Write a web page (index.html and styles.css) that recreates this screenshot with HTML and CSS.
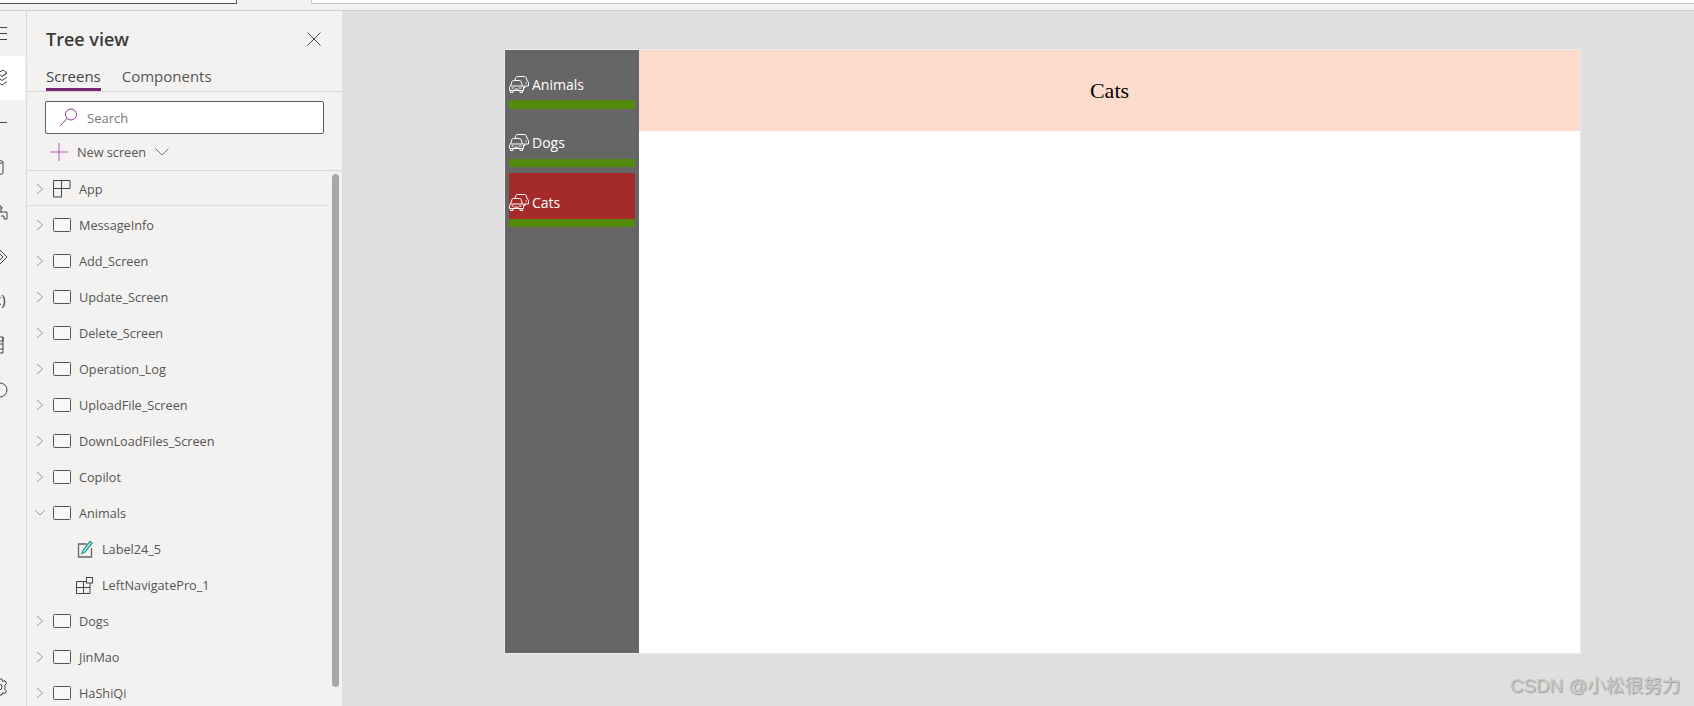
FILE: index.html
```html
<!DOCTYPE html>
<html lang="en">

<head>
    <meta charset="utf-8">
    <title>Tree view</title>
    <link rel="stylesheet" href="styles.css">
</head>

<body>
    <svg class="defs" width="0" height="0">
        <symbol id="screen" viewBox="0 0 18 14">
            <rect x="0.5" y="0.5" width="17" height="13" rx="1" fill="#f9f8f8" stroke="#555"></rect>
        </symbol>
        <symbol id="closed" viewBox="0 0 8 12">
            <path d="M1 1l5.5 5L1 11" fill="none" stroke="#999"></path>
        </symbol>
        <symbol id="car" viewBox="0 0 20 17">
            <g fill="none" stroke="#fff" stroke-width="1">
                <path d="M6 4l1-2.6C7.2.9 7.7.5 8.3.5h7.400c.6 0 1.100.4 1.300.9L18.300 5c.8.4 1.200.9 1.200 1.500V10h-5"></path>
                <path d="M16 10v1.500h-1.500 M16.500 7h1.500"></path>
                <path d="M1.500 10L3 5.500c.2-.6.700-1 1.300-1h6.400c.6 0 1.100.4 1.300 1l1.500 4.500"></path>
                <path d="M1.500 10c-.7.300-1 .7-1 1.300v3.200h14v-3.200c0-.6-.3-1-1-1.300z"></path>
                <path d="M1.500 14.500v2H4v-2 M11 14.500v2h2.500v-2 M2.500 12H5 M10 12h2.500 M5.500 14.500l.7-1.500h2.600l.7 1.500"></path>
            </g>
        </symbol>
    </svg>

    <header class="topbar">
        <div class="topbox topbox-left"></div>
        <div class="topbox topbox-right"></div>
    </header>

    <main class="studio">
        <nav class="rail">
            <div class="rail-item">
                <svg class="rail-icon"><path d="M-8 16.500H7 M-8 22.500H7 M-8 28.500H7"></path></svg>
            </div>
            <div class="rail-item rail-active">
                <svg class="rail-icon"><path d="M-2 17l5-3 4 3-5 3.500 M7 17l-5 3.500L-2 17 M-2 21.500l4 3 5-3.500 M-2 26l4 3 5-3.500"></path></svg>
            </div>
            <div class="rail-item">
                <svg class="rail-icon"><path d="M-8 22.500H7"></path></svg>
            </div>
            <div class="rail-item">
                <svg class="rail-icon"><path d="M-8 17c0-2 11-2 11 0v11c0 2-11 2-11 0z M-8 17c0 2 11 2 11 0"></path></svg>
            </div>
            <div class="rail-item">
                <svg class="rail-icon"><path d="M-3 17h4v6h-4 M1 23h6v7H4v-3H1 M1 19h2"></path></svg>
            </div>
            <div class="rail-item">
                <svg class="rail-icon"><path d="M0 16l7 7-7 7-7-7z M0 20l3 3-3 3"></path></svg>
            </div>
            <div class="rail-item">
                <span class="rail-text">(x)</span>
            </div>
            <div class="rail-item">
                <svg class="rail-icon"><path d="M-4 14h7v4h-7 M3 14v16 M-4 21h7 M-4 26h7 M-4 30h7"></path></svg>
            </div>
            <div class="rail-item">
                <svg class="rail-icon"><circle cx="0" cy="22" r="7"></circle></svg>
            </div>
            <div class="rail-item rail-bottom">
                <svg class="rail-icon"><path d="M-1 14h3l.6 2.400 2.400-.6 1.500 2.600-1.800 1.700.5 2-.5 2 1.800 1.700-1.500 2.600-2.400-.6L2 30h-3"></path><circle cx="-1" cy="22" r="3"></circle></svg>
            </div>
        </nav>

        <aside class="panel">
            <div class="panel-head">
                <h1 class="panel-title">Tree view</h1>
                <svg class="close" width="14" height="14" viewBox="0 0 14 14"><path d="M.5.5l13 13 M13.500.5l-13 13" stroke="#444" fill="none"></path></svg>
            </div>
            <div class="tabs">
                <span class="tab tab-on">Screens</span>
                <span class="tab">Components</span>
            </div>
            <div class="search">
                <svg class="search-icon" width="19" height="19" viewBox="0 0 19 19"><circle cx="12" cy="6.500" r="5.500" fill="none" stroke="#8a3a8e"></circle><path d="M8 10.500L1 18" stroke="#8a3a8e" fill="none"></path></svg>
                <span class="search-text">Search</span>
            </div>
            <div class="newscreen">
                <svg width="18" height="18" viewBox="0 0 18 18"><path d="M0 9h18 M9 0v18" stroke="#a762a9" fill="none"></path></svg>
                <span class="newscreen-text">New screen</span>
                <svg width="14" height="8" viewBox="0 0 14 8"><path d="M.5.5L7 7 13.500.5" stroke="#777" fill="none"></path></svg>
            </div>

            <div class="tree">
                <div class="row row-app">
                    <svg class="chev"><use href="#closed"></use></svg>
                    <svg class="ico" viewBox="0 0 18 18"><path d="M.5.5h16.500v8H.5z M.5 8.500v8.500h8V.5" fill="none" stroke="#444"></path></svg>
                    <span>App</span>
                </div>
                <div class="row"><svg class="chev"><use href="#closed"></use></svg><svg class="ico"><use href="#screen"></use></svg><span>MessageInfo</span></div>
                <div class="row"><svg class="chev"><use href="#closed"></use></svg><svg class="ico"><use href="#screen"></use></svg><span>Add_Screen</span></div>
                <div class="row"><svg class="chev"><use href="#closed"></use></svg><svg class="ico"><use href="#screen"></use></svg><span>Update_Screen</span></div>
                <div class="row"><svg class="chev"><use href="#closed"></use></svg><svg class="ico"><use href="#screen"></use></svg><span>Delete_Screen</span></div>
                <div class="row"><svg class="chev"><use href="#closed"></use></svg><svg class="ico"><use href="#screen"></use></svg><span>Operation_Log</span></div>
                <div class="row"><svg class="chev"><use href="#closed"></use></svg><svg class="ico"><use href="#screen"></use></svg><span>UploadFile_Screen</span></div>
                <div class="row"><svg class="chev"><use href="#closed"></use></svg><svg class="ico"><use href="#screen"></use></svg><span>DownLoadFiles_Screen</span></div>
                <div class="row"><svg class="chev"><use href="#closed"></use></svg><svg class="ico"><use href="#screen"></use></svg><span>Copilot</span></div>
                <div class="row">
                    <svg class="chev chev-open" viewBox="0 0 12 8"><path d="M1 1l5 5 5-5" fill="none" stroke="#999"></path></svg>
                    <svg class="ico"><use href="#screen"></use></svg>
                    <span>Animals</span>
                </div>
                <div class="row row-child">
                    <svg class="ico-child" width="16" height="18" viewBox="0 0 16 18"><path d="M10 4H1.500v13h13V8" fill="none" stroke="#666" stroke-width="1.300"></path><path d="M5 13.500l1-3L13 1.500l2 1.500-7 9z" fill="none" stroke="#1f9c9c" stroke-width="1.300"></path></svg>
                    <span>Label24_5</span>
                </div>
                <div class="row row-child">
                    <svg class="ico-child ico-grid" width="17" height="17" viewBox="0 0 17 17"><path d="M.5 4.500h7v12h-7z M7.500 4.500h6.500v12h-6.500 M.5 10.500h13.500" fill="none" stroke="#444"></path><rect x="10.500" y=".5" width="6" height="5.500" fill="#f3f2f1" stroke="#444"></rect></svg>
                    <span>LeftNavigatePro_1</span>
                </div>
                <div class="row"><svg class="chev"><use href="#closed"></use></svg><svg class="ico"><use href="#screen"></use></svg><span>Dogs</span></div>
                <div class="row"><svg class="chev"><use href="#closed"></use></svg><svg class="ico"><use href="#screen"></use></svg><span>JinMao</span></div>
                <div class="row"><svg class="chev"><use href="#closed"></use></svg><svg class="ico"><use href="#screen"></use></svg><span>HaShiQi</span></div>
            </div>
            <div class="scrollbar"></div>
        </aside>

        <section class="canvas">
            <div class="app">
                <div class="leftnav">
                    <div class="navitem">
                        <div class="navlabel"><svg class="car"><use href="#car"></use></svg><span>Animals</span></div>
                        <div class="navbar"></div>
                    </div>
                    <div class="navitem navitem-dogs">
                        <div class="navlabel"><svg class="car"><use href="#car"></use></svg><span>Dogs</span></div>
                        <div class="navbar"></div>
                    </div>
                    <div class="navitem navitem-on">
                        <div class="navlabel"><svg class="car"><use href="#car"></use></svg><span>Cats</span></div>
                        <div class="navbar"></div>
                    </div>
                </div>
                <div class="content">
                    <div class="heading">Cats</div>
                </div>
            </div>
        </section>
    </main>

    <div class="watermark">CSDN @小松很努力</div>
</body></html>
```

FILE: styles.css
```css
* {
    box-sizing: border-box;
}

html,
body {
    margin: 0;
    height: 706px;
    overflow: hidden;
}

body {
    position: relative;
    font-family: "Open Sans", sans-serif;
    color: #444;
    background-color: #dfdfdf;
}

.defs {
    display: block;
    height: 0;
}

/* strip at the very top */
.topbar {
    display: flex;
    gap: 74px;
    height: 11px;
    background-color: #f1f1f0;
    border-bottom: 1px solid #d2d0ce;
}

.topbox {
    height: 4px;
    background-color: #fff;
}

.topbox-left {
    width: 237px;
    border-bottom: 1px solid #555;
    border-right: 1px solid #555;
}

.topbox-right {
    flex: 1;
    border-bottom: 1px solid #c8c8c8;
    border-left: 1px solid #c8c8c8;
}

.studio {
    display: flex;
    height: 695px;
}

/* icon rail, cut off by the left edge */
.rail {
    display: flex;
    flex-direction: column;
    flex: none;
    width: 27px;
    background-color: #f3f2f1;
    border-right: 1px solid #dcdad8;
}

.rail-item {
    flex: none;
    width: 25px;
    height: 44.6px;
    overflow: hidden;
}

.rail-active {
    background-color: #fff;
    border-radius: 0 2px 2px 0;
}

.rail-icon {
    display: block;
    width: 25px;
    height: 44px;
    fill: none;
    stroke: #444;
}

.rail-text {
    display: block;
    margin-left: -11px;
    font-size: 15px;
    line-height: 40px;
}

.rail-bottom {
    margin-top: auto;
    margin-bottom: -4px;
}

/* tree view panel */
.panel {
    position: relative;
    flex: none;
    width: 315px;
    background-color: #f3f2f1;
}

.panel-head {
    display: flex;
    justify-content: space-between;
    align-items: center;
    height: 51px;
    padding: 5px 21px 0 19px;
}

.panel-title {
    margin: 0;
    font-size: 18px;
    font-weight: 600;
    line-height: 24px;
    color: #3b3a39;
}

.tabs {
    display: flex;
    gap: 21px;
    height: 30px;
    padding-left: 19px;
    border-bottom: 1px solid #d8d6d4;
}

.tab {
    height: 29px;
    font-size: 15px;
    line-height: 29px;
    color: #555;
}

.tab-on {
    color: #444;
    border-bottom: 3px solid #742774;
}

.search {
    display: flex;
    align-items: center;
    gap: 9px;
    width: 279px;
    height: 33px;
    margin: 9px 0 0 18px;
    padding-left: 13px;
    background-color: #fff;
    border: 1px solid #605e5c;
    border-radius: 2px;
}

.search-text {
    font-size: 13px;
    color: #777;
}

.newscreen {
    display: flex;
    align-items: center;
    gap: 9px;
    height: 37px;
    padding-left: 23px;
    border-bottom: 1px solid #d8d6d4;
}

.newscreen-text {
    font-size: 12.7px;
    color: #555;
}

.tree {
    width: 301px;
}

.row {
    display: flex;
    align-items: center;
    height: 36px;
    padding-left: 9px;
    font-size: 12.7px;
    color: #555;
}

.row-app {
    height: 35px;
    margin-bottom: 1px;
    padding-top: 1px;
    border-bottom: 1px solid #dedcda;
}

.row-child {
    padding-left: 50px;
}

.chev {
    flex: none;
    width: 8px;
    height: 12px;
    margin-right: 9px;
}

.chev-open {
    width: 12px;
    height: 8px;
    margin: 0 7px 0 -2px;
}

.ico {
    flex: none;
    width: 18px;
    height: 14px;
    margin-right: 8px;
}

.row-app .ico {
    height: 18px;
}

.ico-child {
    flex: none;
    margin-right: 9px;
}

.ico-grid {
    margin-left: -1px;
}

.close {
    flex: none;
}

.scrollbar {
    position: absolute;
    top: 163px;
    left: 305px;
    width: 7px;
    height: 513px;
    background-color: #a8a8a8;
    border-radius: 4px;
}

/* canvas with the app in it */
.canvas {
    flex: 1;
    padding: 38px 0 0 162px;
    background-color: #dfdfdf;
}

.app {
    display: flex;
    width: 1077px;
    height: 605px;
    background-color: #fff;
    border: 1px solid #ececec;
}

.leftnav {
    flex: none;
    display: flex;
    flex-direction: column;
    gap: 6px;
    width: 134px;
    padding: 5px 4px 0 4px;
    background-color: #666;
}

.navitem {
    display: flex;
    flex-direction: column;
    justify-content: flex-end;
    height: 53.500px;
}

.navitem-dogs {
    height: 52.500px;
}

.navitem-on {
    height: 54px;
    background-color: #a52a2a;
}

.navlabel {
    display: flex;
    align-items: center;
    gap: 3px;
    flex: 1;
    padding: 14px 0 0 0;
    font-size: 14px;
    color: #fff;
}

.navitem-dogs .navlabel {
    padding-top: 11px;
}

.car {
    flex: none;
    width: 20px;
    height: 17px;
}

.navbar {
    flex: none;
    height: 8.500px;
    background-color: #548a0d;
}

.content {
    flex: 1;
}

.heading {
    height: 81px;
    font-family: "Liberation Serif", serif;
    font-size: 22px;
    line-height: 81px;
    text-align: center;
    color: #000;
    background-color: #fedccd;
}

.watermark {
    position: absolute;
    top: 674px;
    left: 1510px;
    font-family: "Liberation Sans", "Noto Sans CJK SC", sans-serif;
    font-size: 18.7px;
    line-height: 24px;
    white-space: nowrap;
    color: #c6c6c6;
    text-shadow: 1px 1px 1px #999;
}
```
